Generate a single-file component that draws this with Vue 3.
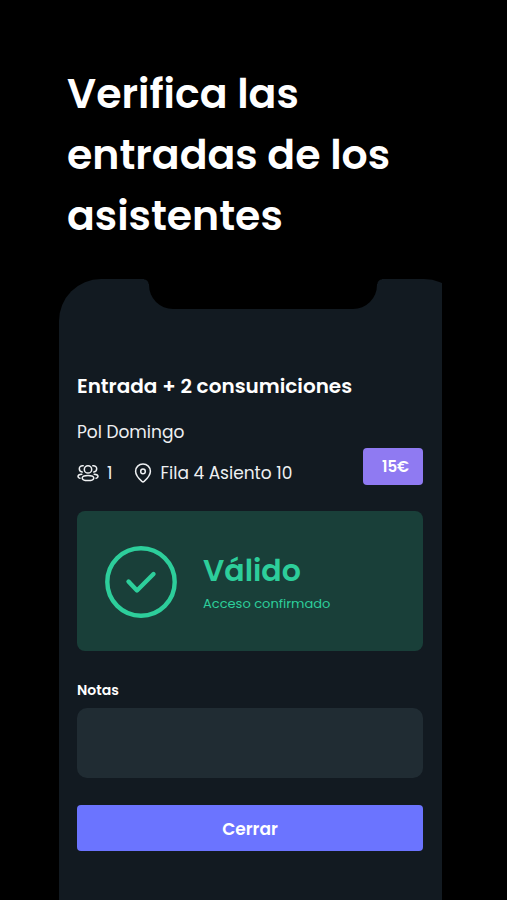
<script setup>
import { ref } from 'vue'

const ticket = {
  type: 'Entrada + 2 consumiciones',
  holder: 'Pol Domingo',
  people: 1,
  seat: 'Fila 4 Asiento 10',
  price: '15€',
}
const notes = ref('')
</script>

<template>
  <main class="page">
    <h1 class="headline">Verifica las<br />entradas de los<br />asistentes</h1>

    <section class="phone">
      <div class="notch"></div>

      <div class="screen">
        <h2 class="ticket-type">{{ ticket.type }}</h2>

        <div class="details">
          <div class="info">
            <p class="holder">{{ ticket.holder }}</p>
            <div class="meta">
              <span class="meta-item">
                <svg class="people" viewBox="0 0 22 20" aria-hidden="true">
                  <circle cx="11" cy="6.4" r="3.7" />
                  <ellipse cx="11" cy="15" rx="5.8" ry="2.6" />
                  <path d="M6.2 2.7C3.6 2.4 2.3 4 2.3 5.8s1.2 2.9 2.9 3.2M15.8 2.7c2.6-.3 3.9 1.3 3.9 3.1s-1.2 2.9-2.9 3.2M4.8 11.3c-2.4.1-3.8 1-3.8 2.2 0 .9.7 1.5 1.9 1.8M17.2 11.3c2.4.1 3.8 1 3.8 2.2 0 .9-.7 1.5-1.9 1.8" />
                </svg>
                {{ ticket.people }}
              </span>
              <span class="meta-item">
                <svg class="pin" viewBox="0 0 18 20" aria-hidden="true">
                  <path d="M9 1.1c-4.2 0-7.4 3.1-7.4 7.1 0 4.3 3.4 7.6 6.3 10.2.7.6 1.5.6 2.2 0 2.9-2.6 6.3-5.9 6.3-10.2 0-4-3.2-7.1-7.4-7.1Z" />
                  <circle cx="9" cy="8.4" r="2.3" />
                </svg>
                {{ ticket.seat }}
              </span>
            </div>
          </div>
          <span class="price">{{ ticket.price }}</span>
        </div>

        <div class="status" role="status">
          <svg class="check" viewBox="0 0 72 72" aria-hidden="true">
            <circle cx="36" cy="36" r="33.7" />
            <path d="m23.5 35.5 8.5 9L48.5 28" />
          </svg>
          <div>
            <p class="status-title">Válido</p>
            <p class="status-text">Acceso confirmado</p>
          </div>
        </div>

        <label class="notes-label" for="notes">Notas</label>
        <textarea id="notes" v-model="notes" class="notes"></textarea>

        <button class="close" type="button">Cerrar</button>
      </div>
    </section>
  </main>
</template>

<style>
body {
  margin: 0;
  background: #000;
}
</style>

<style scoped>
.page {
  display: flex;
  flex-direction: column;
  box-sizing: border-box;
  min-height: 100vh;
  padding-top: 63px;
  background: #000;
  color: #fff;
  font-family: Poppins, Inter, sans-serif;
}

h1,
h2,
p {
  margin: 0;
}

.headline {
  padding: 0 32px 33px 67px;
  font-size: 41px;
  font-weight: 600;
  line-height: 61px;
}

.phone {
  position: relative;
  flex: 1;
  margin: 0 65px 0 59px;
  overflow: hidden;
}

/* The body runs past the right edge, so its corner is cropped. */
.phone::before {
  content: '';
  position: absolute;
  inset: 0 -24px 0 0;
  border-radius: 42px 42px 0 0;
  background: #121a21;
}

.notch {
  position: relative;
  height: 30px;
  margin: 0 65px 0 90px;
  border-radius: 0 0 24px 24px;
  background: #000;
}

.notch::before,
.notch::after {
  content: '';
  position: absolute;
  top: 0;
  width: 5px;
  height: 5px;
}

.notch::before {
  right: 100%;
  background: radial-gradient(circle at 0 100%, #121a21 4px, #000 5px);
}

.notch::after {
  left: 100%;
  background: radial-gradient(circle at 100% 100%, #121a21 4px, #000 5px);
}

.screen {
  position: relative;
  display: flex;
  flex-direction: column;
  padding: 62px 19px 48px 18px;
}

.ticket-type {
  font-size: 20px;
  font-weight: 600;
  line-height: 30px;
}

.details {
  display: flex;
  align-items: flex-end;
  justify-content: space-between;
  margin-top: 19px;
  color: #eef0f2;
}

.holder {
  font-size: 17px;
  line-height: 24px;
}

.meta {
  display: flex;
  gap: 22px;
  padding: 17px 0 15px;
}

.meta-item {
  display: flex;
  align-items: center;
  gap: 8px;
  font-size: 17px;
  line-height: 24px;
}

svg {
  flex: none;
  fill: none;
  stroke: currentColor;
  stroke-linecap: round;
  stroke-linejoin: round;
}

.people {
  width: 22px;
  height: 20px;
  stroke-width: 1.5;
}

.pin {
  width: 18px;
  height: 20px;
  stroke-width: 1.5;
}

.price {
  box-sizing: border-box;
  min-width: 60px;
  margin-bottom: 15px;
  padding: 8px 13px 7px 19px;
  border-radius: 4px;
  background: #8f7af2;
  color: #fff;
  font-size: 15px;
  font-weight: 600;
  line-height: 22px;
}

.status {
  display: flex;
  align-items: center;
  gap: 26px;
  box-sizing: border-box;
  min-height: 140px;
  margin-top: 11px;
  padding: 25px 28px 24px;
  border-radius: 8px;
  background: #193f39;
  color: #2dce9b;
}

.check {
  width: 72px;
  height: 72px;
  stroke-width: 4.4;
}

.status-title {
  padding-top: 2px;
  font-size: 30px;
  font-weight: 600;
  line-height: 42px;
}

.status-text {
  font-size: 13px;
  line-height: 24px;
}

.notes-label {
  margin-top: 28px;
  font-size: 14px;
  font-weight: 600;
  line-height: 22px;
}

.notes {
  box-sizing: border-box;
  height: 70px;
  margin-top: 7px;
  padding: 12px;
  border: 0;
  border-radius: 10px;
  outline: 0;
  background: #202c33;
  color: inherit;
  font: inherit;
  resize: none;
}

.close {
  margin-top: 27px;
  padding: 12px 11px 10px;
  border: 0;
  border-radius: 4px;
  background: #6b74ff;
  color: #fff;
  font: inherit;
  font-size: 17px;
  font-weight: 600;
  line-height: 24px;
}
</style>
